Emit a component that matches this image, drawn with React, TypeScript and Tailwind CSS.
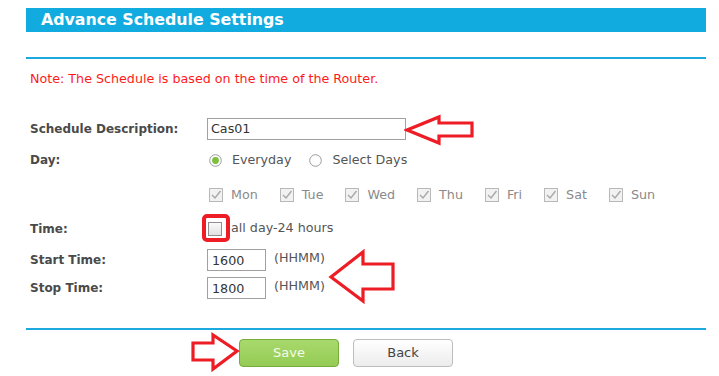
import React from 'react';

const days = ['Mon', 'Tue', 'Wed', 'Thu', 'Fri', 'Sat', 'Sun'];

const DayBox: React.FC<{ label: string }> = ({ label }) => (
  <div className="flex items-center gap-[8px] mr-[22px]">
    <svg width="14" height="14" viewBox="0 0 14 14">
      <rect x="0.5" y="0.5" width="13" height="13" fill="#f2f2f2" stroke="#b8b8b8" />
      <path d="M3 7 L6 10 L11.5 3" fill="none" stroke="#a8a8a8" strokeWidth="1.4" />
    </svg>
    <span className="text-[#8a8a8a]">{label}</span>
  </div>
);

const Radio: React.FC<{ checked?: boolean; label: string }> = ({ checked, label }) => (
  <div className="flex items-center gap-[10px] mr-[18px]">
    <svg width="13" height="13" viewBox="0 0 13 13">
      <circle cx="6.5" cy="6.5" r="5.8" fill="#fff" stroke="#9a9a9a" />
      {checked && <circle cx="6.5" cy="6.5" r="3.4" fill="#7dbf3d" />}
    </svg>
    <span className="text-[#555]">{label}</span>
  </div>
);

const Row: React.FC<{ label: string; h: string; children?: React.ReactNode }> = ({ label, h, children }) => (
  <div className={`flex items-center ${h}`}>
    <div className="w-[181px] pl-[4px] font-bold text-[12px] text-[#4a4a4a]">{label}</div>
    <div className="flex items-center">{children}</div>
  </div>
);

const Arrow: React.FC<{ className: string; w: number; h: number; points: string }> = ({ className, w, h, points }) => (
  <svg className={`absolute ${className}`} width={w} height={h} viewBox={`0 0 ${w} ${h}`}>
    <polygon points={points} fill="none" stroke="#ee1c24" strokeWidth="3.2" strokeLinejoin="miter" />
  </svg>
);

export default function App() {
  return (
    <div className="relative w-[719px] h-[376px] bg-white pt-[8px] text-[12.7px] leading-none" style={{ fontFamily: '"DejaVu Sans", Verdana, sans-serif' }}>
      <div className="ml-[26px] w-[680px]">
        <div className="h-[24px] bg-[#12abe0] flex items-center pl-[15px]">
          <span className="text-white font-bold text-[15.8px]">Advance Schedule Settings</span>
        </div>
        <div className="h-[25px]" />
        <div className="h-[2px] bg-[#1ca9e0]" />
        <div className="h-[39px] flex items-center pl-[4px] pt-[2px] text-[#ff1a1a]">
          Note: The Schedule is based on the time of the Router.
        </div>
        <div className="h-[19px]" />
        <Row label="Schedule Description:" h="h-[24px]">
          <div className="w-[199px] h-[22px] border border-[#a0a0a0] flex items-center pl-[3px] text-[#333]">Cas01</div>
        </Row>
        <Row label="Day:" h="h-[38px]">
          <div className="pl-[2px] flex items-center">
            <Radio checked label="Everyday" />
            <Radio label="Select Days" />
          </div>
        </Row>
        <Row label="" h="h-[32px]">
          <div className="pl-[2px] flex items-center">
            {days.map((d) => (
              <DayBox key={d} label={d} />
            ))}
          </div>
        </Row>
        <Row label="Time:" h="h-[35px]">
          <div className="flex items-center gap-[9px] pl-[1px]">
            <div className="w-[14px] h-[14px] border border-[#8f8f8f] bg-gradient-to-b from-[#fafafa] to-[#e2e2e2]" />
            <span className="text-[#555]">all day-24 hours</span>
          </div>
        </Row>
        <Row label="Start Time:" h="h-[28px]">
          <div className="w-[59px] h-[22px] border border-[#a0a0a0] flex items-end pb-[2px] pl-[4px] text-[#333]">1600</div>
          <span className="ml-[8px] -mt-[4px] text-[#555]">(HHMM)</span>
        </Row>
        <Row label="Stop Time:" h="h-[28px]">
          <div className="w-[59px] h-[22px] border border-[#a0a0a0] flex items-end pb-[2px] pl-[4px] text-[#333]">1800</div>
          <span className="ml-[8px] -mt-[4px] text-[#555]">(HHMM)</span>
        </Row>
        <div className="h-[26px]" />
        <div className="h-[1.5px] bg-[#1ca9e0]" />
        <div className="flex pt-[9px] pl-[213px] gap-[14px]">
          <button className="w-[100px] h-[28px] rounded-[4px] border border-[#76ad38] bg-gradient-to-b from-[#a8d96c] to-[#94cb55] text-[#f4fbe8] text-[13px]">
            Save
          </button>
          <button className="w-[100px] h-[28px] rounded-[4px] border border-[#bdbdbd] bg-gradient-to-b from-white to-[#ececec] text-[#444] text-[13px]">
            Back
          </button>
        </div>
      </div>

      {/* annotations */}
      <Arrow className="left-[404px] top-[113px]" w={72} h={34} points="3,17 35,4 35,10 68,10 68,23 35,23 35,30" />
      <Arrow className="left-[328px] top-[249px]" w={70} h={55} points="3,28 35,3 35,15 65,15 65,40 35,40 35,52" />
      <Arrow className="left-[191px] top-[332px]" w={49} h={42} points="46,19 22,3 22,11 2,11 2,28 22,28 22,37" />
      <div className="absolute left-[202px] top-[214px] w-[28px] h-[28px] rounded-[5px] border-[4px] border-[#ee1c24]" />
    </div>
  );
}
